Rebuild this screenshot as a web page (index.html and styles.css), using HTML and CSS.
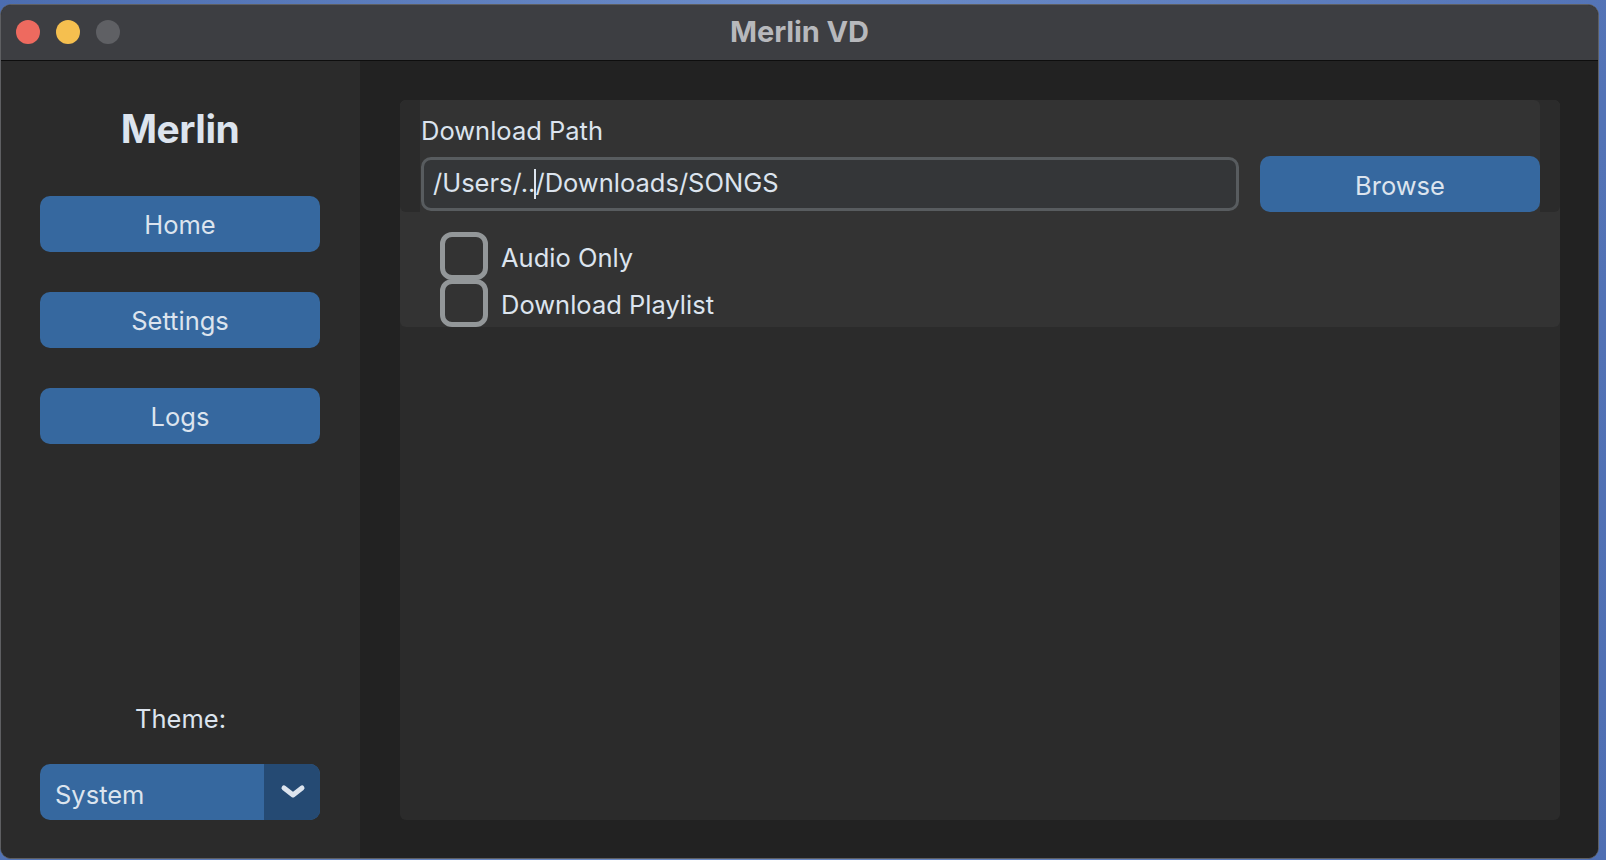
FILE: index.html
```html
<!DOCTYPE html>
<html lang="en">
<head>
<meta charset="utf-8">
<title>Merlin VD</title>
<link rel="stylesheet" href="styles.css">
</head>
<body>
<div class="window">
  <div class="titlebar">
    <div class="lights">
      <span class="light red"></span>
      <span class="light yellow"></span>
      <span class="light gray"></span>
    </div>
    <div class="wtitle">Merlin VD</div>
    <div class="spacer"></div>
  </div>
  <div class="content">
    <aside class="sidebar">
      <div class="brand">Merlin</div>
      <nav class="nav">
        <button class="btn nav-btn">Home</button>
        <button class="btn nav-btn">Settings</button>
        <button class="btn nav-btn">Logs</button>
      </nav>
      <div class="theme">
        <div class="theme-label">Theme:</div>
        <div class="select">
          <span class="select-value">System</span>
          <span class="select-arrow">
            <svg width="26" height="18" viewBox="0 0 26 18"><polyline points="4,5 13,12 22,5" fill="none" stroke="#dce4ee" stroke-width="5" stroke-linecap="round" stroke-linejoin="round"/></svg>
          </span>
        </div>
      </div>
    </aside>
    <main class="main">
      <div class="frame">
        <div class="card">
          <div class="path-frame">
            <div class="path-inner">
              <div class="field-label">Download Path</div>
              <div class="path-row">
                <div class="entry">/Users/..<span class="caret"></span>/Downloads/SONGS</div>
                <button class="btn browse">Browse</button>
              </div>
            </div>
          </div>
          <div class="checks">
            <label class="check"><span class="box"></span><span class="check-text">Audio Only</span></label>
            <label class="check second"><span class="box"></span><span class="check-text">Download Playlist</span></label>
          </div>
        </div>
      </div>
    </main>
  </div>
</div>
</body>
</html>
```
FILE: styles.css
```css
* { box-sizing: border-box; }
html, body { margin: 0; padding: 0; }
body {
  width: 1606px;
  height: 860px;
  overflow: hidden;
  background: linear-gradient(100deg, #4c6db0 0%, #6c8cc8 45%, #4f6fb3 100%);
  font-family: Inter, "Noto Sans", "Liberation Sans", sans-serif;
  color: #dce4ee;
}
.window {
  margin-top: 4px;
  width: 1599px;
  height: 855px;
  border: 1px solid #5e5f62;
  border-radius: 11px;
  overflow: hidden;
  display: flex;
  flex-direction: column;
  background: #242424;
}
.titlebar {
  height: 56px;
  flex: none;
  background: #3d3e42;
  border-bottom: 1px solid #0e0e0e;
  display: grid;
  grid-template-columns: 1fr auto 1fr;
  align-items: center;
}
.lights {
  display: flex;
  gap: 16px;
  padding-left: 15px;
  padding-bottom: 2px;
}
.light {
  width: 24px;
  height: 24px;
  border-radius: 50%;
  display: block;
}
.red { background: #ee6a5f; }
.yellow { background: #f5bf4f; }
.gray { background: #5f6064; }
.wtitle {
  font-weight: 700;
  font-size: 29px;
  color: #b7b8bc;
  letter-spacing: -0.1px;
  padding-bottom: 2px;
}
.content {
  flex: 1;
  display: flex;
  min-height: 0;
}
.sidebar {
  width: 359px;
  flex: none;
  background: #2b2b2b;
  display: flex;
  flex-direction: column;
  align-items: center;
  padding: 44px 0 38px 0;
}
.brand {
  font-size: 39px;
  line-height: 48px;
  font-weight: 700;
  color: #dce4ee;
  letter-spacing: -0.5px;
  margin-left: -1px;
}
.nav {
  display: flex;
  flex-direction: column;
  gap: 40px;
  margin-top: 43px;
}
.btn {
  font-family: inherit;
  border: none;
  background: #36689f;
  color: #dce4ee;
  font-size: 25.5px;
  border-radius: 10px;
  padding: 0;
}
.nav-btn {
  width: 280px;
  height: 56px;
  margin-left: -1px;
  padding-top: 1px;
}
.theme {
  margin-top: auto;
  display: flex;
  flex-direction: column;
  align-items: center;
  gap: 30px;
}
.theme-label {
  font-size: 25.5px;
  line-height: 30px;
  padding-top: 2px;
}
.select {
  width: 280px;
  height: 56px;
  margin-left: -1px;
  border-radius: 10px;
  overflow: hidden;
  display: flex;
  background: #36689f;
}
.select-value {
  flex: 1;
  display: flex;
  align-items: center;
  padding-left: 15px;
  padding-top: 4px;
  font-size: 25.5px;
}
.select-arrow {
  width: 56px;
  background: #254a73;
  display: flex;
  align-items: center;
  justify-content: center;
  padding-left: 2px;
}
.main {
  flex: 1;
  padding: 39px 38px 38px 40px;
  background: #222222;
}
.frame {
  height: 100%;
  background: #2b2b2b;
  border-radius: 6px;
}
.card {
  background: #333333;
  border-radius: 6px;
}
.path-frame {
  background: #2b2b2b;
  border-radius: 6px;
  padding: 0 20px;
}
.path-inner {
  background: #333333;
  padding: 16px 0 0 1px;
  border-radius: 0 6px 0 0;
}
.field-label {
  font-size: 25.5px;
  line-height: 30px;
}
.path-row {
  display: flex;
  align-items: center;
  gap: 21px;
  margin-top: 10px;
  height: 56px;
}
.entry {
  flex: 1;
  height: 54px;
  border: 3px solid #585c5f;
  border-radius: 10px;
  background: #343638;
  font-size: 25.5px;
  padding-left: 9px;
  padding-bottom: 3px;
  display: flex;
  align-items: center;
  white-space: pre;
}
.caret {
  display: inline-block;
  width: 2px;
  height: 30px;
  background: #dce4ee;
  margin: 3px -1px 0 -1px;
}
.browse {
  width: 280px;
  height: 56px;
  flex: none;
  padding-top: 2px;
}
.checks {
  padding: 20px 0 0 40px;
  display: flex;
  flex-direction: column;
}
.check {
  display: flex;
  align-items: center;
  gap: 13px;
  font-size: 25.5px;
}
.check.second { margin-top: -1px; }
.box {
  width: 48px;
  height: 48px;
  border: 5px solid #939799;
  border-radius: 12px;
  flex: none;
}
.check-text { line-height: 30px; padding-top: 4px; }
```
